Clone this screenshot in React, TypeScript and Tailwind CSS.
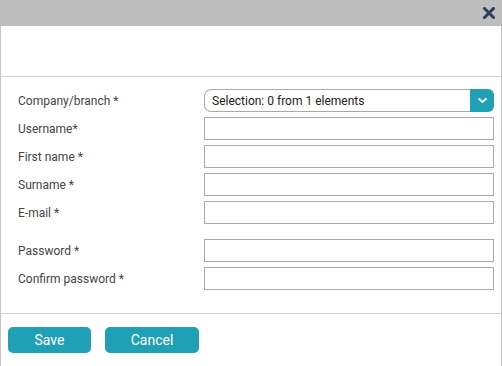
const fields = [
  { label: "Username*" },
  { label: "First name *" },
  { label: "Surname *" },
  { label: "E-mail *" },
];

const passwordFields = [{ label: "Password *" }, { label: "Confirm password *" }];

const Row = ({ label }: { label: string }) => (
  <div className="flex items-center h-[23px]">
    <label className="w-[186px] text-[12px] text-[#444]">{label}</label>
    <input type="text" className="w-[290px] h-[23px] border border-[#a9a9a9] bg-white outline-none" />
  </div>
);

export default function App() {
  return (
    <div className="w-[502px] h-[366px] bg-white flex flex-col overflow-hidden" style={{ fontFamily: "Roboto, 'Liberation Sans', sans-serif" }}>
      <div className="h-[26px] bg-[#bdbdbd] flex items-center justify-end pr-[7px] shrink-0">
        <svg width="12" height="12" viewBox="0 0 12 12">
          <path d="M1.5 1.5 L10.5 10.5 M10.5 1.5 L1.5 10.5" stroke="#2e3d5c" strokeWidth="3" strokeLinecap="square" />
        </svg>
      </div>
      <div className="flex-1 flex flex-col border-x border-[#c4c4c4]">
        <div className="h-[51px] border-b border-[#cfcfcf]"></div>
        <div className="pl-[17px] pt-[12px] pb-[23px] border-b border-[#cfcfcf] flex flex-col gap-[5px]">
          <div className="flex items-center h-[23px]">
            <label className="w-[186px] text-[12px] text-[#444]">Company/branch *</label>
            <div className="w-[290px] h-[23px] flex">
              <div className="flex-1 border border-[#a9a9a9] border-r-0 rounded-l-[7px] flex items-center pl-[7px] text-[12px] text-[#222]">
                Selection: 0 from 1 elements
              </div>
              <div className="w-[24px] bg-[#1fa0b5] rounded-r-[6px] flex items-center justify-center">
                <svg width="11" height="7" viewBox="0 0 11 7">
                  <path d="M1.5 1.5 L5.5 5 L9.5 1.5" stroke="#fff" strokeWidth="2" fill="none" />
                </svg>
              </div>
            </div>
          </div>
          {fields.map((f) => (
            <Row key={f.label} label={f.label} />
          ))}
          <div className="h-[5px]"></div>
          {passwordFields.map((f) => (
            <Row key={f.label} label={f.label} />
          ))}
        </div>
        <div className="flex gap-[14px] pl-[7px] pt-[13px]">
          <button className="w-[83px] h-[26px] bg-[#1fa0b5] rounded-[5px] text-white text-[14px]">Save</button>
          <button className="w-[94px] h-[26px] bg-[#1fa0b5] rounded-[5px] text-white text-[14px]">Cancel</button>
        </div>
      </div>
    </div>
  );
}
